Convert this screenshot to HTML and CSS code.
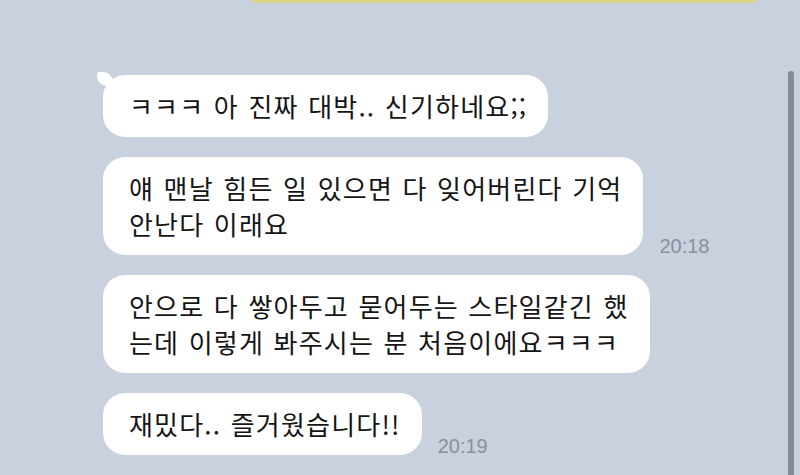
FILE: index.html
```html
<!DOCTYPE html>
<html lang="ko">
<head>
    <meta charset="UTF-8">
    <title>채팅</title>
    <link rel="stylesheet" href="styles.css">
</head>
<body>
<div class="my-bubble"></div>
<div class="chat">
    <div class="row">
        <div class="bubble first">ㅋㅋㅋ 아 진짜 대박.. 신기하네요;;</div>
    </div>
    <div class="row">
        <div class="bubble">얘 맨날 힘든 일 있으면 다 잊어버린다 기억<br>안난다 이래요</div>
        <span class="time">20:18</span>
    </div>
    <div class="row">
        <div class="bubble">안으로 다 쌓아두고 묻어두는 스타일같긴 했<br>는데 이렇게 봐주시는 분 처음이에요ㅋㅋㅋ</div>
    </div>
    <div class="row">
        <div class="bubble">재밌다.. 즐거웠습니다!!</div>
        <span class="time">20:19</span>
    </div>
</div>
<div class="scrollbar"></div>
</body>
</html>
```

FILE: styles.css
```css
html, body {
    margin: 0;
    height: 475px;
    overflow: hidden;
}
body {
    background: #c9d1de;
    font-family: "Noto Sans CJK KR", "Noto Sans", sans-serif;
    position: relative;
}

.my-bubble {
    margin-left: 252px;
    width: 504px;
    height: 3px;
    background: #dbd48c;
    border-radius: 0 0 3px 3px;
}

.chat {
    display: flex;
    flex-direction: column;
    gap: 20px;
    padding: 72px 0 0 103px;
}

.row {
    display: flex;
    align-items: flex-end;
    gap: 16px;
}

.bubble {
    position: relative;
    background: #fff;
    color: #151515;
    border-radius: 22px;
    padding: 13px 21px 13px 26px;
    font-size: 26px;
    line-height: 36px;
    letter-spacing: 1.2px;
    word-spacing: 1px;
    white-space: nowrap;
}

.first:before {
    content: "";
    position: absolute;
    left: -6px;
    top: -3px;
    width: 16px;
    height: 14px;
    background: #fff;
    border-radius: 2px 10px 0 10px;
}

.time {
    font-family: "Liberation Sans", sans-serif;
    font-size: 20px;
    line-height: 1;
    color: #8b909b;
    margin-bottom: -1px;
}

.scrollbar {
    position: absolute;
    left: 788px;
    top: 71px;
    bottom: 0;
    width: 6px;
    background: #868b95;
    border-radius: 3px 3px 0 0;
}
```
